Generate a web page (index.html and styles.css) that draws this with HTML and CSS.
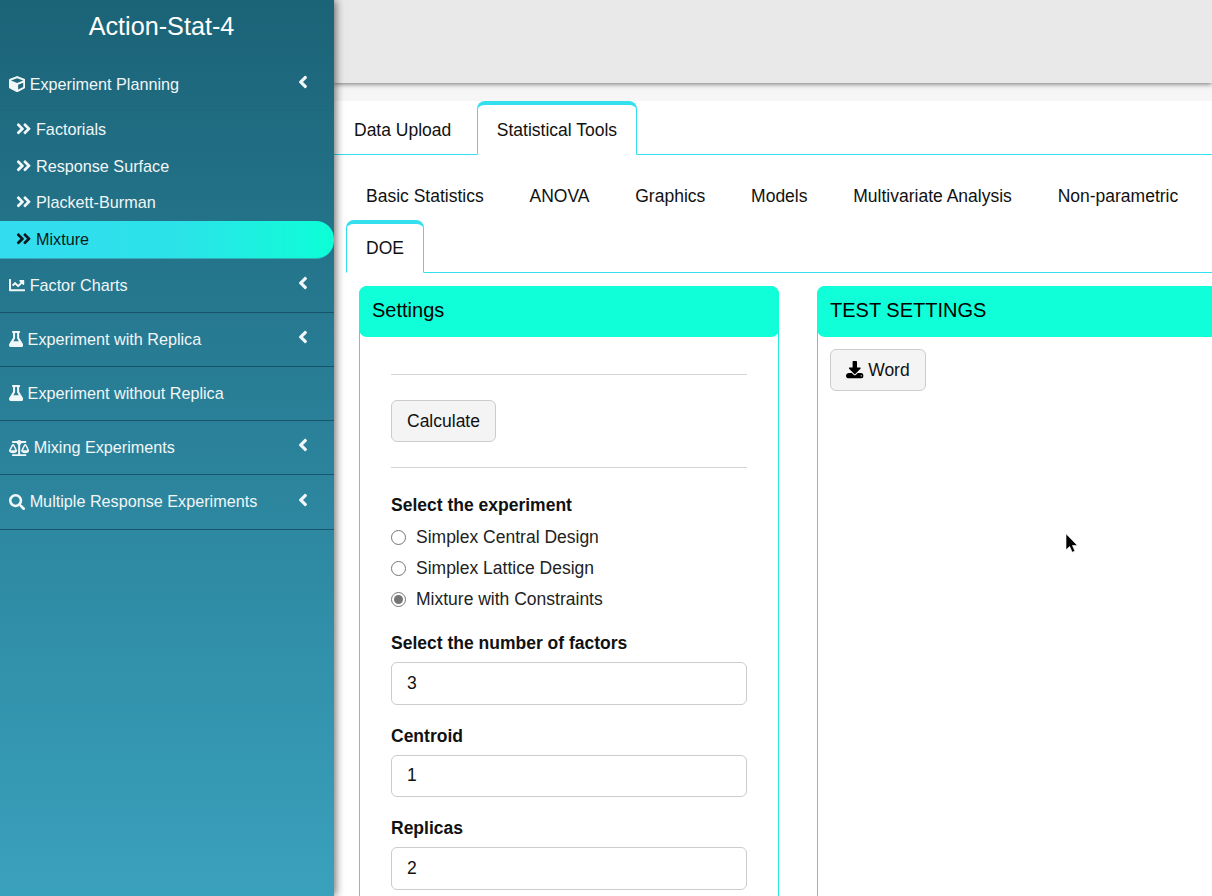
FILE: index.html
```html
<!DOCTYPE html>
<html lang="en">
<head>
<meta charset="utf-8">
<title>Action-Stat-4</title>
<link rel="stylesheet" href="styles.css">
</head>
<body>
<svg class="defs" aria-hidden="true">
  <symbol id="i-cube" viewBox="0 0 512 512"><path d="M239.1 6.3l-208 78c-18.7 7-31.1 25-31.1 45v225.1c0 18.2 10.3 34.8 26.5 42.9l208 104c13.5 6.8 29.4 6.8 42.9 0l208-104c16.3-8.1 26.5-24.8 26.5-42.9V129.3c0-20-12.4-37.9-31.1-44.9l-208-78C262 2.2 250 2.2 239.1 6.3zM256 68.4l192 72v1.1l-192 78-192-78v-1.1l192-72zm32 356V275.5l160-65v133.9l-160 80z"/></symbol>
  <symbol id="i-chart" viewBox="0 0 512 512"><path d="M496 384H64V80c0-8.84-7.16-16-16-16H16C7.16 64 0 71.16 0 80v336c0 17.67 14.33 32 32 32h464c8.84 0 16-7.16 16-16v-32c0-8.84-7.16-16-16-16zM464 96H345.94c-21.38 0-32.09 25.85-16.97 40.97l32.4 32.4L288 242.75l-73.37-73.37c-12.5-12.5-32.76-12.5-45.25 0l-68.69 68.69c-6.25 6.25-6.25 16.38 0 22.63l22.62 22.62c6.25 6.25 16.38 6.25 22.63 0L192 237.25l73.37 73.37c12.5 12.5 32.76 12.5 45.25 0l96-96 32.4 32.4c15.12 15.12 40.97 4.41 40.97-16.97V112c.01-8.84-7.15-16-15.99-16z"/></symbol>
  <symbol id="i-flask" viewBox="0 0 448 512"><path d="M437.2 403.5L320 215V64h8c13.3 0 24-10.7 24-24V24c0-13.3-10.7-24-24-24H120c-13.3 0-24 10.7-24 24v16c0 13.3 10.7 24 24 24h8v151L10.8 403.5C-18.5 450.6 15.3 512 70.9 512h306.2c55.7 0 89.4-61.5 60.1-108.5zM137.9 320l48.2-77.6c3.7-5.2 5.8-11.6 5.8-18.4V64h64v160c0 6.9 2.2 13.2 5.8 18.4l48.2 77.6h-172z"/></symbol>
  <symbol id="i-scale" viewBox="0 0 640 512"><path d="M256 336h-.02c0-16.18 1.34-8.73-85.05-181.51-17.65-35.29-68.19-35.36-85.87 0C-2.06 328.75.02 320.33.02 336H0c0 44.18 57.31 80 128 80s128-35.82 128-80zM128 176l72 144H56l72-144zm511.98 160c0-16.18 1.34-8.73-85.05-181.51-17.65-35.29-68.19-35.36-85.87 0-87.12 174.26-85.04 165.84-85.04 181.51H384c0 44.18 57.31 80 128 80s128-35.82 128-80h-.02zM440 320l72-144 72 144H440zm88 128H352V153.25c23.51-10.29 41.16-31.48 46.39-57.25H528c8.84 0 16-7.16 16-16V48c0-8.84-7.16-16-16-16H383.64C369.04 12.68 346.09 0 320 0s-49.04 12.68-63.64 32H112c-8.84 0-16 7.16-16 16v32c0 8.84 7.16 16 16 16h129.61c5.23 25.76 22.87 46.96 46.39 57.25V448H112c-8.84 0-16 7.16-16 16v32c0 8.84 7.16 16 16 16h416c8.84 0 16-7.16 16-16v-32c0-8.84-7.16-16-16-16z"/></symbol>
  <symbol id="i-search" viewBox="0 0 512 512"><path d="M505 442.7L405.3 343c-4.5-4.5-10.6-7-17-7H372c27.6-35.3 44-79.7 44-128C416 93.1 322.9 0 208 0S0 93.1 0 208s93.1 208 208 208c48.3 0 92.7-16.4 128-44v16.3c0 6.4 2.5 12.5 7 17l99.7 99.7c9.4 9.4 24.6 9.4 33.9 0l28.3-28.3c9.4-9.4 9.4-24.6.1-34zM208 336c-70.7 0-128-57.2-128-128 0-70.7 57.2-128 128-128 70.7 0 128 57.2 128 128 0 70.7-57.2 128-128 128z"/></symbol>
  <symbol id="i-download" viewBox="0 0 512 512"><path fill-rule="evenodd" d="M216 0h80c13.3 0 24 10.7 24 24v168h87.7c17.8 0 26.7 21.5 14.1 34.1L269.7 378.3c-7.5 7.5-19.8 7.5-27.3 0L90.1 226.1c-12.6-12.6-3.7-34.1 14.1-34.1H192V24c0-13.3 10.7-24 24-24zM90 352h80.7l49 49c20.1 20.1 52.5 20.1 72.6 0l49-49H436c42 0 76 36 76 80s-34 80-76 80H76c-42 0-76-36-76-80 0-46 40-80 90-80zM444 412c-11 0-20 9-20 20s9 20 20 20 20-9 20-20-9-20-20-20z"/></symbol>
  <symbol id="i-dbl" viewBox="0 0 448 512"><path d="M224.3 273l-136 136c-9.4 9.4-24.6 9.4-33.9 0l-22.6-22.6c-9.4-9.4-9.4-24.6 0-33.9l96.4-96.4-96.4-96.4c-9.4-9.4-9.4-24.6 0-33.9L54.3 103c9.4-9.4 24.6-9.4 33.9 0l136 136c9.5 9.4 9.5 24.6.1 34zm192-34l-136-136c-9.4-9.4-24.6-9.4-33.9 0l-22.6 22.6c-9.4 9.4-9.4 24.6 0 33.9l96.4 96.4-96.4 96.4c-9.4 9.4-9.4 24.6 0 33.9l22.6 22.6c9.4 9.4 24.6 9.4 33.9 0l136-136c9.4-9.2 9.4-24.4 0-33.8z"/></symbol>
  <symbol id="i-left" viewBox="0 0 256 512"><path d="M31.7 239l136-136c9.4-9.4 24.6-9.4 33.9 0l22.6 22.6c9.4 9.4 9.4 24.6 0 33.9L127.9 256l96.4 96.4c9.4 9.4 9.4 24.6 0 33.9L201.7 409c-9.4 9.4-24.6 9.4-33.9 0l-136-136c-9.5-9.4-9.5-24.6-.1-34z"/></symbol>
</svg>

<aside class="sidebar">
  <div class="brand">Action-Stat-4</div>
  <nav class="menu">
    <a class="item open">
      <svg class="ic w16"><use href="#i-cube"/></svg><span class="label">Experiment Planning</span>
      <svg class="chev"><use href="#i-left"/></svg>
    </a>
    <div class="sub">
      <a class="sub-item"><svg class="ic dbl"><use href="#i-dbl"/></svg><span>Factorials</span></a>
      <a class="sub-item"><svg class="ic dbl"><use href="#i-dbl"/></svg><span>Response Surface</span></a>
      <a class="sub-item"><svg class="ic dbl"><use href="#i-dbl"/></svg><span>Plackett-Burman</span></a>
      <a class="sub-item active"><svg class="ic dbl"><use href="#i-dbl"/></svg><span>Mixture</span></a>
    </div>
    <a class="item">
      <svg class="ic w16"><use href="#i-chart"/></svg><span class="label">Factor Charts</span>
      <svg class="chev"><use href="#i-left"/></svg>
    </a>
    <a class="item">
      <svg class="ic w14"><use href="#i-flask"/></svg><span class="label">Experiment with Replica</span>
      <svg class="chev"><use href="#i-left"/></svg>
    </a>
    <a class="item">
      <svg class="ic w14"><use href="#i-flask"/></svg><span class="label">Experiment without Replica</span>
    </a>
    <a class="item">
      <svg class="ic w20"><use href="#i-scale"/></svg><span class="label">Mixing Experiments</span>
      <svg class="chev"><use href="#i-left"/></svg>
    </a>
    <a class="item">
      <svg class="ic w16"><use href="#i-search"/></svg><span class="label">Multiple Response Experiments</span>
      <svg class="chev"><use href="#i-left"/></svg>
    </a>
  </nav>
</aside>

<main class="main">
  <header class="topbar"></header>
  <section class="content">
    <ul class="tabs tabs-top">
      <li class="tab">Data Upload</li>
      <li class="tab current">Statistical Tools</li>
    </ul>
    <div class="pane">
      <ul class="tabs tabs-sub">
        <li class="tab">Basic Statistics</li>
        <li class="tab">ANOVA</li>
        <li class="tab">Graphics</li>
        <li class="tab">Models</li>
        <li class="tab">Multivariate Analysis</li>
        <li class="tab">Non-parametric</li>
        <li class="tab current">DOE</li>
      </ul>
      <div class="panels">
        <div class="panel panel-left">
          <div class="panel-head">Settings</div>
          <div class="panel-body form">
            <hr class="rule">
            <button class="btn btn-calc" type="button">Calculate</button>
            <hr class="rule">
            <div class="field-title">Select the experiment</div>
            <label class="radio"><input type="radio" name="exp"><span>Simplex Central Design</span></label>
            <label class="radio"><input type="radio" name="exp"><span>Simplex Lattice Design</span></label>
            <label class="radio"><input type="radio" name="exp" checked><span>Mixture with Constraints</span></label>
            <div class="group first">
              <label class="field-title">Select the number of factors</label>
              <input class="input" type="text" value="3">
            </div>
            <div class="group">
              <label class="field-title">Centroid</label>
              <input class="input" type="text" value="1">
            </div>
            <div class="group">
              <label class="field-title">Replicas</label>
              <input class="input" type="text" value="2">
            </div>
          </div>
        </div>
        <div class="panel panel-right">
          <div class="panel-head">TEST SETTINGS</div>
          <div class="panel-body">
            <button class="btn btn-word" type="button"><svg class="dl"><use href="#i-download"/></svg>Word</button>
          </div>
        </div>
      </div>
    </div>
  </section>
  <svg class="cursor" viewBox="0 0 14 20"><path d="M1 0.5V16.5L4.7 13.2L7.2 19L9.9 17.8L7.4 12.2H12.4Z" fill="#000" stroke="#fff" stroke-width=".6"/></svg>
</main>
</body>
</html>
```
FILE: styles.css
```css
* { box-sizing: border-box; }
html, body { margin: 0; height: 100%; }
body {
  display: flex;
  height: 896px;
  overflow: hidden;
  font-family: "Liberation Sans", Arial, sans-serif;
  font-size: 17.5px;
  line-height: 24px;
  color: #111;
  background: #fff;
}
.defs { position: absolute; width: 0; height: 0; }

/* sidebar */
.sidebar {
  flex: 0 0 334px;
  height: 896px;
  position: relative;
  z-index: 2;
  background: linear-gradient(180deg, #1b6377 0%, #3aa1bd 100%);
  box-shadow: 2px 0 8px rgba(0, 0, 0, .55);
  color: #fff;
  font-size: 16.2px;
}
.brand {
  height: 58px;
  padding: 13px 11px 0 0;
  text-align: center;
  font-size: 25.2px;
  line-height: 26px;
}
.menu { display: flex; flex-direction: column; }
.item {
  position: relative;
  display: flex;
  align-items: center;
  gap: 4.4px;
  height: 54.2px;
  padding: 0 9px;
  border-bottom: 1px solid rgba(20, 70, 95, .75);
  color: #f1f6f8;
}
.label { position: relative; top: -.5px; }
.item.open { height: 53.4px; border-bottom-color: rgba(20, 70, 95, .08); }
.item.open .label { top: 0; }
.ic { fill: currentColor; flex: none; height: 16.25px; }
.w14 { width: 14.2px; }
.w16 { width: 16.25px; }
.w20 { width: 20.3px; }
.ic.dbl { width: 15.4px; height: 17.6px; }
.chev {
  position: absolute;
  right: 26px;
  top: 14.3px;
  width: 10px;
  height: 20px;
  fill: currentColor;
}
.sub { display: flex; flex-direction: column; height: 147.2px; }
.sub-item {
  flex: 1;
  display: flex;
  align-items: center;
  gap: 4.6px;
  padding: 0 0 1px 16px;
  color: #f1f6f8;
}
.sub-item.active {
  color: #0b1a20;
  background: linear-gradient(90deg, #34dcf0 0%, #2be3e8 55%, #0cffd6 100%);
  border-radius: 0 18px 18px 0;
  border-bottom: 1px solid rgba(60, 130, 150, .6);
}

/* main column */
.main { flex: 1; min-width: 0; position: relative; display: flex; flex-direction: column; background: #f6f6f6; }
.topbar {
  flex: 0 0 83px;
  background: #e9e9e9;
  box-shadow: 0 1px 5px rgba(0, 0, 0, .55);
  position: relative;
  z-index: 1;
}
.content { margin-top: 18px; flex: 1; background: #fff; overflow: hidden; }

/* tabs */
.tabs {
  display: flex;
  flex-wrap: wrap;
  column-gap: 5.5px;
  list-style: none;
  margin: 0;
  padding: 0;
  border-bottom: 1px solid #35e0ee;
}
.tab {
  padding: 13px 19px 12px;
  border: 1px solid transparent;
  border-top-width: 4px;
  border-radius: 8px 8px 0 0;
  margin-bottom: -1px;
  height: 54px;
  white-space: nowrap;
  color: #111;
}
.tab.current {
  border-color: #35e0ee;
  border-top-color: #35e0ee;
  border-bottom-color: #fff;
  background: #fff;
}
.pane { padding: 13px 0 0 12px; }
.tabs-sub { column-gap: 5.8px; }
.tabs-sub .tab { height: 53px; padding-top: 12px; }

/* panels */
.panels { display: flex; gap: 38px; margin: 13px 0 0 13px; }
.panel {
  flex: none;
  border: 1px solid #1fe9d8;
  border-radius: 8px 8px 0 0;
  height: 640px;
  background: #fff;
}
.panel-left { width: 420px; }
.panel-right { width: 420px; flex: 1 0 420px; }
.panel-head {
  height: 51px;
  margin: -1px -1px 0;
  padding: 0 13px;
  background: #10ffd8;
  border-radius: 8px;
  color: #000;
  font-size: 20px;
  line-height: 49px;
}
.panel-body { padding: 12px; }
.form { padding: 37px 31px 0; }
.rule { margin: 0; border: 0; border-top: 1px solid #d4d4d4; }
.btn {
  display: inline-flex;
  align-items: center;
  font: inherit;
  color: #111;
  height: 42px;
  padding: 0 15px;
  background: #f4f4f4;
  border: 1px solid #ccc;
  border-radius: 6px;
}
.btn-calc { margin: 25px 0; display: flex; }
.dl { width: 17.6px; height: 17.6px; fill: #000; margin-right: 4.6px; }
.field-title { display: block; font-weight: 700; color: #111; margin-bottom: 7px; }
.form > .field-title { margin: 25px 0 4px; }
.radio { display: flex; align-items: center; height: 31px; color: #222; }
.radio input {
  width: 15px;
  height: 15px;
  margin: 1px 10px 0 0;
  accent-color: #757575;
}
.group { margin-top: 19px; }
.group.first { margin-top: 17px; }
.input {
  display: block;
  width: 100%;
  height: 42.5px;
  padding: 0 15px;
  font: inherit;
  color: #111;
  background: #fff;
  border: 1px solid #ccc;
  border-radius: 6px;
  outline: 0;
}
.cursor { position: absolute; left: 731px; top: 533px; width: 14px; height: 20.5px; z-index: 3; }
```
